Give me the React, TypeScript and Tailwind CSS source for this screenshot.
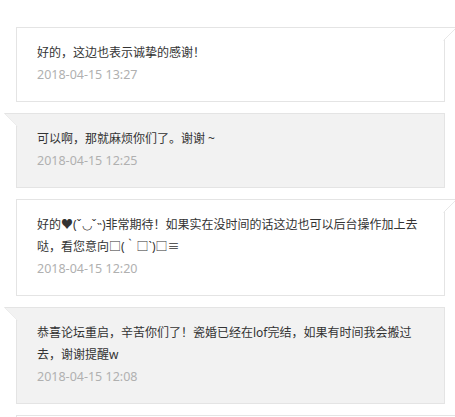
import React from 'react';

type Msg = { text: string; time: string; side: 'left' | 'right' };

const messages: Msg[] = [
  { text: '好的，这边也表示诚挚的感谢！', time: '2018-04-15 13:27', side: 'right' },
  { text: '可以啊，那就麻烦你们了。谢谢 ~', time: '2018-04-15 12:25', side: 'left' },
  {
    text: '好的♥(ˇ◡ˇ˵)非常期待！如果实在没时间的话这边也可以后台操作加上去哒，看您意向□(｀□ˋ)□≡',
    time: '2018-04-15 12:20',
    side: 'right',
  },
  {
    text: '恭喜论坛重启，辛苦你们了！瓷婚已经在lof完结，如果有时间我会搬过去，谢谢提醒w',
    time: '2018-04-15 12:08',
    side: 'left',
  },
  { text: '', time: '', side: 'right' },
];

function Tail({ side }: { side: 'left' | 'right' }) {
  if (side === 'right') {
    return (
      <svg
        className="absolute top-[-1px] left-[calc(100%-1px)]"
        width="14"
        height="14"
        viewBox="0 0 14 14"
      >
        <polygon points="0,0 14,0 0,14" fill="#ffffff" />
        <line x1="0" y1="0.5" x2="14" y2="0.5" stroke="#e4e4e4" />
        <line x1="14" y1="0" x2="0.5" y2="13.5" stroke="#e8e8e8" />
      </svg>
    );
  }
  return (
    <svg
      className="absolute top-[-1px] right-[calc(100%-1px)]"
      width="14"
      height="14"
      viewBox="0 0 14 14"
    >
      <polygon points="0,0 14,0 14,14" fill="#f2f2f2" />
      <line x1="0" y1="0.5" x2="14" y2="0.5" stroke="#e4e4e4" />
      <line x1="0" y1="0" x2="13.5" y2="13.5" stroke="#ececec" />
    </svg>
  );
}

function Bubble({ msg }: { msg: Msg }) {
  const bg = msg.side === 'left' ? 'bg-[#f2f2f2]' : 'bg-white';
  return (
    <div className={`relative border border-[#e4e4e4] ${bg} pt-[14px] pb-[15px] pl-5 pr-5`}>
      <Tail side={msg.side} />
      <p className="text-[12px] leading-[22px] text-[#333333]">{msg.text}</p>
      <p className="text-[12.5px] leading-[22px] text-[#b0b0b0]">{msg.time}</p>
    </div>
  );
}

export default function App() {
  return (
    <div
      className="w-[455px] h-[417px] overflow-hidden bg-white"
      style={{ fontFamily: '"Noto Sans", "Noto Sans CJK SC", sans-serif' }}
    >
      <div className="ml-4 mr-[10px] pt-[27px] flex flex-col gap-[11px]">
        {messages.map((m, i) => (
          <Bubble key={i} msg={m} />
        ))}
      </div>
    </div>
  );
}
